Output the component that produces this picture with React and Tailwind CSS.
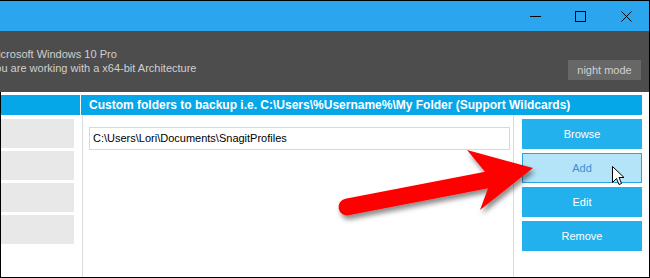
import React from "react";

const font = { fontFamily: '"Liberation Sans", Arial, sans-serif' };

const buttons = ["Browse", "Add", "Edit", "Remove"];

function TitleBar() {
  return (
    <div className="h-[30px] bg-[#2aa5ee] flex items-center justify-end pr-[17px] shrink-0">
      <svg width="11" height="11" viewBox="0 0 11 11" className="mr-[34px]">
        <line x1="0" y1="5.5" x2="11" y2="5.5" stroke="#000" strokeWidth="1" />
      </svg>
      <svg width="11" height="11" viewBox="0 0 11 11" className="mr-[35px]">
        <rect x="0.5" y="0.5" width="10" height="10" fill="none" stroke="#000" strokeWidth="1" />
      </svg>
      <svg width="11" height="11" viewBox="0 0 11 11">
        <path d="M0.5 0.5 L10.5 10.5 M10.5 0.5 L0.5 10.5" stroke="#000" strokeWidth="1" />
      </svg>
    </div>
  );
}

function InfoBar() {
  return (
    <div className="h-[61px] bg-[#4d4d4d] flex shrink-0 overflow-hidden">
      <div className="flex-1 pt-[16px] -ml-[11px] text-[11px] leading-[14px] text-[#cfcfcf]">
        <div>Microsoft Windows 10 Pro</div>
        <div>You are working with a x64-bit Architecture</div>
      </div>
      <div className="pt-[29px] pr-[8px]">
        <div className="w-[73px] h-[20px] bg-[#676767] text-[#d0d0d0] text-[11px] flex items-center justify-center">
          night mode
        </div>
      </div>
    </div>
  );
}

function Arrow() {
  return (
    <svg className="absolute left-0 top-0 pointer-events-none" width="650" height="278" viewBox="0 0 650 278">
      <defs>
        <filter id="sh" x="-20%" y="-20%" width="140%" height="160%">
          <feDropShadow dx="2" dy="4" stdDeviation="2.5" floodColor="#000" floodOpacity="0.45" />
        </filter>
      </defs>
      <g filter="url(#sh)" fill="#ff0000">
        <line x1="347" y1="206" x2="492" y2="178" stroke="#ff0000" strokeWidth="17" strokeLinecap="round" />
        <polygon points="467,149 533,167 480,209 490,182 486,172" />
      </g>
    </svg>
  );
}

function Cursor() {
  return (
    <svg className="absolute left-[612px] top-[165px] pointer-events-none" width="13" height="21" viewBox="0 0 13 21">
      <path d="M0.5 0.5 L0.5 16.5 L4.5 12.5 L7 18.5 L9.5 17.5 L7 11.5 L12 11.5 Z" fill="#fff" stroke="#000" strokeWidth="1" strokeLinejoin="miter" />
    </svg>
  );
}

export default function App() {
  return (
    <div className="relative w-[650px] h-[278px] overflow-hidden bg-white border-t border-r border-b border-black flex flex-col" style={font}>
      <TitleBar />
      <InfoBar />
      <div className="flex-1 flex border-l border-black pt-[3px]">
        <div className="w-[79px] flex flex-col">
          <div className="h-[20px] bg-[#05a7e8]" />
          <div className="flex flex-col gap-[3px] pt-[4px]">
            {[0, 1, 2, 3].map((i) => (
              <div key={i} className="w-[73px] h-[29px] bg-[#e8e8e8]" />
            ))}
          </div>
        </div>
        <div className="w-[561px] ml-[1px] flex flex-col">
          <div className="h-[20px] bg-[#05a7e8] pl-[8px] flex items-center text-white font-bold text-[12px] whitespace-nowrap">
            {"Custom folders to backup i.e. C:\\Users\\%Username%\\My Folder (Support Wildcards)"}
          </div>
          <div className="flex-1 flex">
            <div className="ml-[1px] w-[432px] border-l border-r border-[#dcdcdc] pt-[12px] pl-[6px]">
              <div className="w-[421px] h-[23px] border border-[#d9d9d9] flex items-center pl-[3px] text-[11px] text-black">
                {"C:\\Users\\Lori\\Documents\\SnagitProfiles"}
              </div>
            </div>
            <div className="ml-[8px] w-[120px] pt-[4px] flex flex-col gap-[4px]">
              {buttons.map((b) =>
                b === "Add" ? (
                  <div key={b} className="h-[30px] bg-[#b3e4f8] border border-[#2aa3e0] text-[#3f8fd8] text-[11px] flex items-center justify-center">
                    {b}
                  </div>
                ) : (
                  <div key={b} className="h-[30px] bg-[#22b1ec] text-white text-[11px] flex items-center justify-center">
                    {b}
                  </div>
                )
              )}
            </div>
          </div>
        </div>
      </div>
      <Arrow />
      <Cursor />
    </div>
  );
}
